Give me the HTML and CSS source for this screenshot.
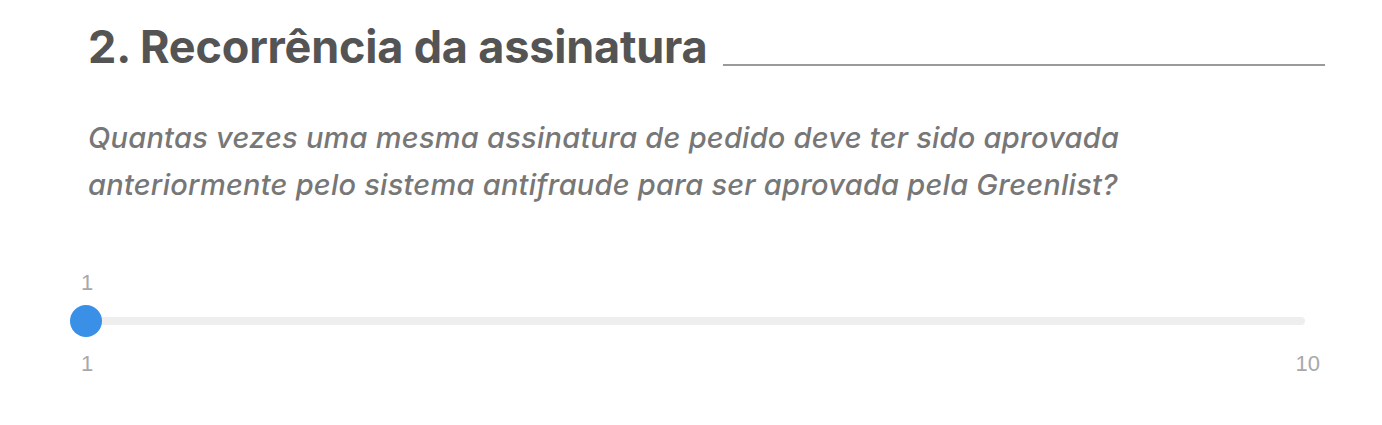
FILE: index.html
```html
<!DOCTYPE html>
<html lang="pt">
<head>
<meta charset="utf-8">
<link rel="stylesheet" href="styles.css">
</head>
<body>
<section class="section">
  <div class="head">
    <h2 class="title">2. Recorrência da assinatura</h2>
    <div class="rule"></div>
  </div>
  <p class="question">Quantas vezes uma mesma assinatura de pedido deve ter sido aprovada<br>anteriormente pelo sistema antifraude para ser aprovada pela Greenlist?</p>
  <div class="slider">
    <div class="current">1</div>
    <div class="track"><div class="thumb"></div></div>
    <div class="scale"><span>1</span><span>10</span></div>
  </div>
</section>
</body>
</html>
```
FILE: styles.css
```css
html, body { margin: 0; padding: 0; background: #fff; }
body { font-family: Inter, "Liberation Sans", sans-serif; }
.section { padding: 20px 57px 0 88px; }
.head { display: flex; align-items: flex-end; gap: 16px; }
.title { margin: 0; font-size: 45px; font-weight: 700; color: #545454; line-height: 54px; letter-spacing: -0.2px; white-space: nowrap; }
.rule { flex: 1; height: 2px; background: #9a9a9a; margin-bottom: 8px; }
.question { margin: 40px 0 0; font-size: 29px; font-style: italic; font-weight: 500; color: #777; line-height: 47px; letter-spacing: 0.25px; }
.slider { margin: 63px 20px 0 -2px; }
.label { font-family: "Liberation Sans", Arial, sans-serif; }
.current { font-family: "Liberation Sans", Arial, sans-serif; font-size: 22px; color: #a8a8a8; line-height: 24px; margin-left: -5px; }
.track { position: relative; height: 8px; background: #eee; border-radius: 4px; margin-top: 22px; }
.thumb { position: absolute; left: -16px; top: -12px; width: 32px; height: 32px; border-radius: 50%; background: #3a8fe7; }
.scale { display: flex; justify-content: space-between; margin: 27px -15px 0 -5px; font-family: "Liberation Sans", Arial, sans-serif; font-size: 22px; color: #a8a8a8; line-height: 24px; }
```
